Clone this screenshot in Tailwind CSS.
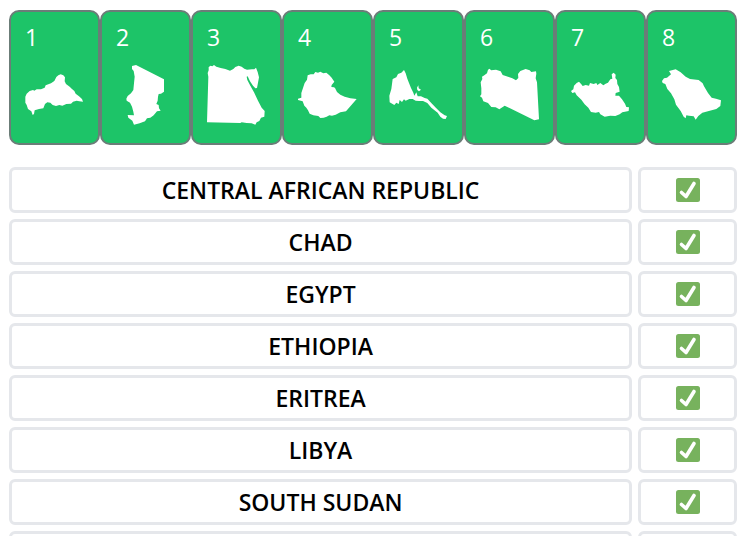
<!DOCTYPE html>
<html lang="en">
<head>
    <meta charset="UTF-8">
    <meta name="viewport" content="width=device-width, initial-scale=1.0">
    <title>Country shapes</title>
    <script src="https://cdn.jsdelivr.net/npm/@tailwindcss/browser@4"></script>
</head>
<body class="bg-white font-['Open_Sans',sans-serif] text-black">
    <main class="pl-[9px] pr-[13px] pt-[10px] pb-4">
        <!-- Shapes -->
        <section class="grid grid-cols-8 text-[23px] text-white">
            <div class="rounded-[10px] border-2 border-[#6b7d78] bg-[#1dc468] px-3.5 pt-2 pb-4.5">
                <p class="leading-[34px]">1</p>
                <svg class="mt-[11px] w-full" viewBox="75 195 177 180" fill="currentColor"><path d="M76 290 80 281 89 273 99 270 103 272 110 268 123 268 134 263 137 256 153 250 163 243 169 231 175 226 182 223 190 226 195 232 194 244 198 252 209 260 216 267 223 273 227 281 237 289 246 297 249 305 238 304 230 302 219 305 213 311 199 312 187 317 178 315 168 318 158 315 151 308 142 307 135 312 130 325 117 327 104 331 102 342 98 345 94 334 84 327 80 315 76 308Z"/></svg>
            </div>
            <div class="rounded-[10px] border-2 border-[#6b7d78] bg-[#1dc468] px-3.5 pt-2 pb-4.5">
                <p class="leading-[34px]">2</p>
                <svg class="mt-[11px] w-full" viewBox="63 195 177 180" fill="currentColor"><path d="M111 198 123 195 207 238 207 275 198 281 191 282 189 290 188 302 184 312 191 315 192 325 197 332 186 334 176 346 166 353 156 355 150 364 134 370 117 374 112 362 100 353 98 345 117 346 115 335 111 320 105 308 95 302 94 296 98 288 108 280 115 270 117 250 119 230 116 213 111 207Z"/></svg>
            </div>
            <div class="rounded-[10px] border-2 border-[#6b7d78] bg-[#1dc468] px-3.5 pt-2 pb-4.5">
                <p class="leading-[34px]">3</p>
                <svg class="mt-[11px] w-full" viewBox="63 195 177 180" fill="currentColor"><path d="M68 201 74 197 79 199 84 195 91 200 104 204 118 207 132 212 142 207 148 201 158 197 167 200 175 206 183 209 198 208 205 208 210 203 215 216 219 232 216 248 213 264 208 265 201 257 192 244 185 229 182 230 184 240 193 257 204 277 216 302 227 323 236 333 235 350 225 353 220 363 212 367 208 374 197 370 182 369 167 367 163 369 63 367 67 230 65 219 68 211Z"/></svg>
            </div>
            <div class="rounded-[10px] border-2 border-[#6b7d78] bg-[#1dc468] px-3.5 pt-2 pb-4.5">
                <p class="leading-[34px]">4</p>
                <svg class="mt-[11px] w-full" viewBox="63 195 177 180" fill="currentColor"><path d="M92 226 101 223 110 223 115 216 123 218 130 215 139 220 148 218 157 226 164 233 169 241 172 245 164 255 163 261 171 262 174 264 180 276 190 284 203 290 220 295 239 297 207 334 190 337 176 344 165 347 157 346 149 350 140 353 130 354 124 348 109 346 98 341 93 331 88 323 82 317 77 304 63 300 63 296 73 293 73 279 79 261 83 249 90 239Z"/></svg>
            </div>
            <div class="rounded-[10px] border-2 border-[#6b7d78] bg-[#1dc468] px-3.5 pt-2 pb-4.5">
                <p class="leading-[34px]">5</p>
                <svg class="mt-[11px] w-full" viewBox="63 195 177 180" fill="currentColor"><path d="M74 237 85 232 90 222 100 218 108 210 113 220 118 236 123 249 129 264 136 278 139 287 145 277 149 289 159 289 170 294 178 296 187 306 202 322 217 337 230 346 237 348 233 357 225 356 217 350 209 338 190 323 178 309 165 303 153 303 143 302 134 297 124 297 113 302 108 298 102 306 95 300 92 312 85 308 79 315 70 310 65 307 64 287 70 267 72 252ZM147 263 151 256 152 265 159 269 153 274 148 270Z"/></svg>
            </div>
            <div class="rounded-[10px] border-2 border-[#6b7d78] bg-[#1dc468] px-3.5 pt-2 pb-4.5">
                <p class="leading-[34px]">6</p>
                <svg class="mt-[11px] w-full" viewBox="63 195 177 180" fill="currentColor"><path d="M87 209 92 206 96 211 111 209 125 214 131 225 147 230 160 235 171 241 178 234 177 222 184 213 200 207 212 211 217 216 231 214 232 221 230 235 234 247 240 358 226 361 137 317 121 328 110 322 97 321 87 309 73 304 69 293 63 289 67 283 67 265 65 247 70 237 69 230 77 225 84 220Z"/></svg>
            </div>
            <div class="rounded-[10px] border-2 border-[#6b7d78] bg-[#1dc468] px-3.5 pt-2 pb-4.5">
                <p class="leading-[34px]">7</p>
                <svg class="mt-[11px] w-full" viewBox="63 195 177 180" fill="currentColor"><path d="M63 273 70 268 72 257 80 249 87 245 94 253 98 258 107 255 117 257 120 249 131 252 139 249 142 255 151 249 160 256 167 251 174 248 181 238 187 236 185 223 191 218 197 224 196 234 201 240 202 252 207 261 209 275 197 279 196 287 207 287 216 298 225 311 229 321 237 322 236 333 217 337 209 343 196 348 181 347 164 350 151 343 147 336 137 338 123 336 115 323 104 313 94 299 80 286 75 277 67 279Z"/></svg>
            </div>
            <div class="rounded-[10px] border-2 border-[#6b7d78] bg-[#1dc468] px-3.5 pt-2 pb-4.5">
                <p class="leading-[34px]">8</p>
                <svg class="mt-[11px] w-full" viewBox="66 195 177 180" fill="currentColor"><path d="M66 243 72 235 81 233 87 228 93 223 87 213 107 208 122 217 137 230 150 237 176 240 188 250 192 259 204 279 215 293 228 296 243 301 241 318 229 327 187 338 175 348 167 359 161 349 147 347 139 346 137 355 131 350 122 333 108 314 103 298 93 280 82 267 76 252 68 249Z"/></svg>
            </div>
        </section>

        <!-- Answers -->
        <section class="mt-[22px] grid auto-rows-[46px] grid-cols-7 gap-1.5 text-center text-[23px] font-semibold *:flex *:items-center *:justify-center *:rounded-md *:border-3 *:border-gray-200">
            <div class="col-span-6">CENTRAL AFRICAN REPUBLIC</div>
            <div>
                <svg class="size-6" viewBox="0 0 24 24" role="img" aria-label="Correct"><rect width="24" height="24" rx="2.5" fill="#77b25d"/><path d="M5.5 14.5 10 18.5 18 5.5" fill="none" stroke="#fff" stroke-width="3.6" stroke-linecap="round" stroke-linejoin="round"/></svg>
            </div>
            <div class="col-span-6">CHAD</div>
            <div>
                <svg class="size-6" viewBox="0 0 24 24" role="img" aria-label="Correct"><rect width="24" height="24" rx="2.5" fill="#77b25d"/><path d="M5.5 14.5 10 18.5 18 5.5" fill="none" stroke="#fff" stroke-width="3.6" stroke-linecap="round" stroke-linejoin="round"/></svg>
            </div>
            <div class="col-span-6">EGYPT</div>
            <div>
                <svg class="size-6" viewBox="0 0 24 24" role="img" aria-label="Correct"><rect width="24" height="24" rx="2.5" fill="#77b25d"/><path d="M5.5 14.5 10 18.5 18 5.5" fill="none" stroke="#fff" stroke-width="3.6" stroke-linecap="round" stroke-linejoin="round"/></svg>
            </div>
            <div class="col-span-6">ETHIOPIA</div>
            <div>
                <svg class="size-6" viewBox="0 0 24 24" role="img" aria-label="Correct"><rect width="24" height="24" rx="2.5" fill="#77b25d"/><path d="M5.5 14.5 10 18.5 18 5.5" fill="none" stroke="#fff" stroke-width="3.6" stroke-linecap="round" stroke-linejoin="round"/></svg>
            </div>
            <div class="col-span-6">ERITREA</div>
            <div>
                <svg class="size-6" viewBox="0 0 24 24" role="img" aria-label="Correct"><rect width="24" height="24" rx="2.5" fill="#77b25d"/><path d="M5.5 14.5 10 18.5 18 5.5" fill="none" stroke="#fff" stroke-width="3.6" stroke-linecap="round" stroke-linejoin="round"/></svg>
            </div>
            <div class="col-span-6">LIBYA</div>
            <div>
                <svg class="size-6" viewBox="0 0 24 24" role="img" aria-label="Correct"><rect width="24" height="24" rx="2.5" fill="#77b25d"/><path d="M5.5 14.5 10 18.5 18 5.5" fill="none" stroke="#fff" stroke-width="3.6" stroke-linecap="round" stroke-linejoin="round"/></svg>
            </div>
            <div class="col-span-6">SOUTH SUDAN</div>
            <div>
                <svg class="size-6" viewBox="0 0 24 24" role="img" aria-label="Correct"><rect width="24" height="24" rx="2.5" fill="#77b25d"/><path d="M5.5 14.5 10 18.5 18 5.5" fill="none" stroke="#fff" stroke-width="3.6" stroke-linecap="round" stroke-linejoin="round"/></svg>
            </div>
            <div class="col-span-6"></div>
            <div></div>
        </section>
    </main>
</body>
</html>
